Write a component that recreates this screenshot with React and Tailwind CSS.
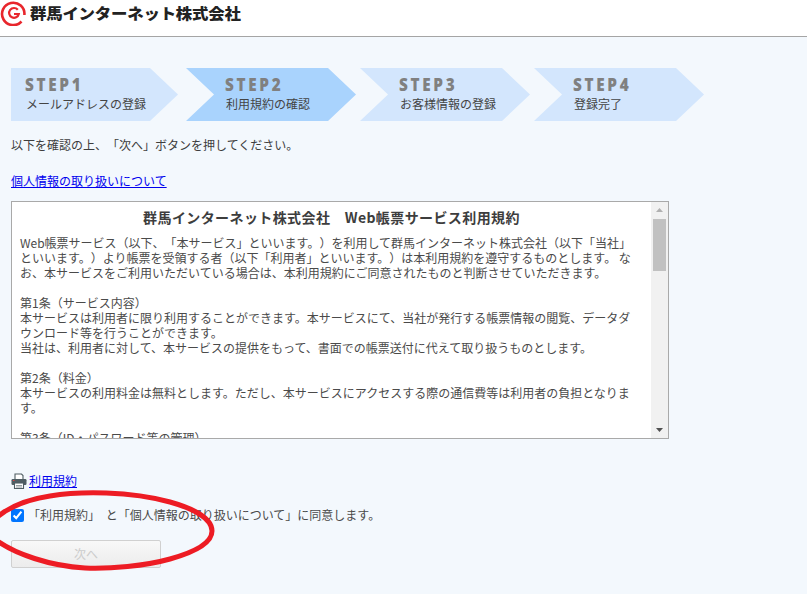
const FONT = "font-['Noto_Sans_CJK_JP','Noto_Sans',sans-serif]";

const steps = [
  { no: "STEP1", label: "メールアドレスの登録", box: "w-[167px]", pad: "pl-[14px]", clip: "[clip-path:polygon(0_0,139px_0,100%_50%,139px_100%,0_100%)]", bg: "bg-[#d3e6fd]" },
  { no: "STEP2", label: "利用規約の確認", box: "ml-[8px] w-[170px]", pad: "pl-[39px]", clip: "[clip-path:polygon(0_0,142px_0,100%_50%,142px_100%,0_100%,28px_50%)]", bg: "bg-[#a9d3fd]" },
  { no: "STEP3", label: "お客様情報の登録", box: "ml-[4px] w-[170px]", pad: "pl-[39px]", clip: "[clip-path:polygon(0_0,142px_0,100%_50%,142px_100%,0_100%,28px_50%)]", bg: "bg-[#d3e6fd]" },
  { no: "STEP4", label: "登録完了", box: "ml-[4px] w-[170px]", pad: "pl-[39px]", clip: "[clip-path:polygon(0_0,142px_0,100%_50%,142px_100%,0_100%,28px_50%)]", bg: "bg-[#d3e6fd]" },
];

const terms = [
  "Web帳票サービス（以下、「本サービス」といいます。）を利用して群馬インターネット株式会社（以下「当社」",
  "といいます。）より帳票を受領する者（以下「利用者」といいます。）は本利用規約を遵守するものとします。 な",
  "お、本サービスをご利用いただいている場合は、本利用規約にご同意されたものと判断させていただきます。",
  "",
  "第1条（サービス内容）",
  "本サービスは利用者に限り利用することができます。本サービスにて、当社が発行する帳票情報の閲覧、データダ",
  "ウンロード等を行うことができます。",
  "当社は、利用者に対して、本サービスの提供をもって、書面での帳票送付に代えて取り扱うものとします。",
  "",
  "第2条（料金）",
  "本サービスの利用料金は無料とします。ただし、本サービスにアクセスする際の通信費等は利用者の負担となりま",
  "す。",
  "",
  "第3条（ID・パスワード等の管理）",
];

function Logo() {
  return (
    <svg width="26" height="26" viewBox="0 0 26 26" className="shrink-0">
      <path d="M21.500 21.500A11.200 11.200 0 1 1 24.400 15" fill="none" stroke="#e8262c" strokeWidth="2.600" />
      <path d="M17.800 9.800A4.900 4.900 0 1 0 18.800 14H14" fill="none" stroke="#e8262c" strokeWidth="2.200" />
    </svg>
  );
}

function PrinterIcon() {
  return (
    <svg width="16" height="16" viewBox="0 0 16 16" className="shrink-0">
      <path d="M4 6V1h6.500L12 2.500V6" fill="#fff" stroke="#4f5d63" strokeWidth="1.100" />
      <rect x="0.500" y="6" width="15" height="6" rx="1.200" fill="#4f5d63" />
      <rect x="2" y="7" width="1.500" height="1" fill="#e0403c" />
      <rect x="3.500" y="10" width="9" height="5.500" fill="#fff" stroke="#4f5d63" strokeWidth="1.100" />
      <path d="M5 12.500h6M5 14h6" stroke="#7b878c" strokeWidth="0.800" />
    </svg>
  );
}

export default function App() {
  return (
    <div className={`relative h-[594px] w-[807px] overflow-hidden bg-[#f3f8fd] text-[12px] text-[#3d3d3d] [text-spacing-trim:space-all] ${FONT}`}>
      <header className="flex h-[37px] items-start gap-[4px] border-b border-[#a5a5a5] bg-white">
        <Logo />
        <span className="mt-[2px] origin-left scale-x-[1.095] whitespace-nowrap text-[15px] leading-[22px] font-black tracking-[-0.2px] text-[#222]">
          群馬インターネット株式会社
        </span>
      </header>

      <main className="px-[11px] pt-[31px]">
        <ol className="flex">
          {steps.map((s) => (
            <li key={s.no} className={`h-[53px] ${s.box} ${s.bg} ${s.pad} ${s.clip}`}>
              <div className="mt-[5px] origin-left scale-x-[0.9] font-['Open_Sans',sans-serif] text-[17px] leading-[24px] font-extrabold tracking-[3px] text-[#808080]">
                {s.no}
              </div>
              <div className="-mt-[1px] ml-[1px] whitespace-nowrap text-[12px] leading-[16px] text-[#444]">{s.label}</div>
            </li>
          ))}
        </ol>

        <p className="mt-[15px] leading-[18px]">以下を確認の上、「次へ」ボタンを押してください。</p>

        <a href="#" className="mt-[18px] block leading-[18px] text-[#0000ee] underline">
          個人情報の取り扱いについて
        </a>

        <section className="mt-[11px] flex h-[238px] w-[658px] overflow-hidden border border-[#a9a9a9] bg-white">
          <div className="min-w-0 flex-1 pl-[8px]">
            <h2 className="-ml-[8px] mt-[6px] text-center text-[14px] leading-[18px] font-bold tracking-[0.4px]">
              群馬インターネット株式会社　Web帳票サービス利用規約
            </h2>
            <div className="mt-[9px] text-[#4a4a4a]">
              {terms.map((line, i) => (
                <div key={i} className="h-[15px] whitespace-nowrap leading-[15px]">{line}</div>
              ))}
            </div>
          </div>
          <div className="flex w-[17px] shrink-0 flex-col items-center bg-[#f1f1f1]">
            <svg width="9" height="17" viewBox="0 0 9 17" className="shrink-0">
              <path d="M4.500 6 8 10H1z" fill="#b0b0b0" />
            </svg>
            <div className="h-[52px] w-[13px] bg-[#c1c1c1]" />
            <div className="flex-1" />
            <svg width="9" height="17" viewBox="0 0 9 17" className="shrink-0">
              <path d="M1 7h7l-3.500 4z" fill="#505050" />
            </svg>
          </div>
        </section>

        <div className="mt-[33px] flex items-center gap-[2px]">
          <PrinterIcon />
          <a href="#" className="leading-[18px] text-[#0000ee] underline">利用規約</a>
        </div>

        <label className="mt-[16px] flex items-center">
          <input type="checkbox" defaultChecked className="m-0 h-[13px] w-[13px] accent-[#0075ff]" />
          <span className="ml-[4px] leading-[18px] text-[#4a4a4a] [word-spacing:3px]">「利用規約」 と「個人情報の取り扱いについて」に同意します。</span>
        </label>

        <button disabled className="mt-[16px] block h-[28px] w-[150px] rounded-[2px] border border-[#d0d0d0] bg-gradient-to-b from-[#f8f8f8] to-[#ececec] text-[12px] text-[#ccc]">
          次へ
        </button>
      </main>

      {/* 赤い手書きの丸 */}
      <svg width="807" height="594" className="pointer-events-none absolute left-0 top-0">
        <path
          d="M-4 518C10 506 30 499 50 496C80 491 130 491 170 502C195 509 212 519 212 531C212 543 195 552 170 559C145 566 110 569 85 568C50 566 15 554 -4 540"
          fill="none"
          stroke="#ed1c24"
          strokeWidth="5"
        />
      </svg>
    </div>
  );
}
